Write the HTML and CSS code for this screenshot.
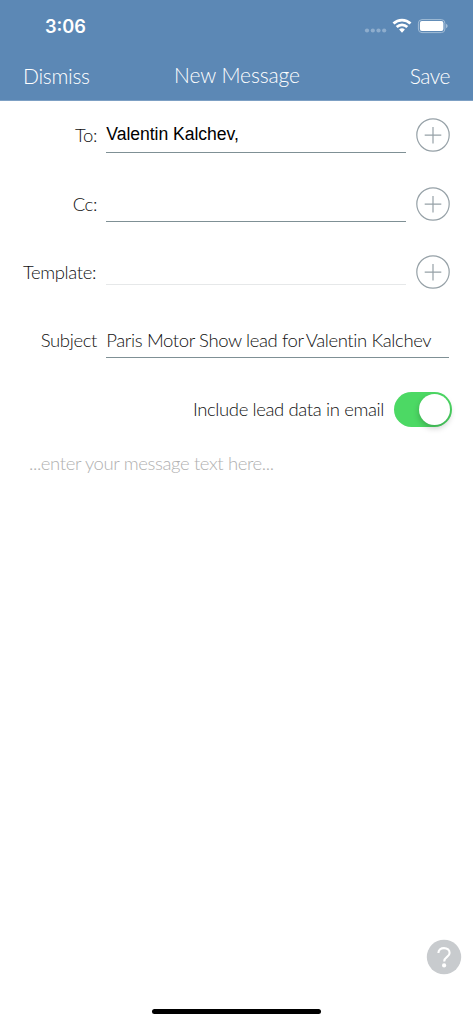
FILE: index.html
```html
<!DOCTYPE html>
<html lang="en">
<head>
<meta charset="utf-8">
<title>New Message</title>
<link rel="stylesheet" href="styles.css">
</head>
<body>
<div class="screen">
  <header class="top">
    <div class="status">
      <span class="time">3:06</span>
      <svg class="indicators" width="84" height="20" viewBox="0 0 84 20">
        <g fill="#8eadcd"><circle cx="3" cy="14.5" r="2.1"/><circle cx="8.8" cy="14.5" r="2.1"/><circle cx="14.5" cy="14.5" r="2.1"/><circle cx="20.2" cy="14.5" r="2.1"/></g>
        <g fill="none" stroke="#fff" stroke-width="2.8"><path d="M29.5 7.6a12.2 12.2 0 0 1 17 0"/><path d="M32.7 11a7.7 7.7 0 0 1 10.6 0"/></g>
        <path d="M35.1 13.6a4.4 4.4 0 0 1 5.8 0L38 16.7z" fill="#fff"/>
        <rect x="54.4" y="3.6" width="26.5" height="13" rx="3.6" fill="none" stroke="#a3bdd7"/>
        <rect x="55.9" y="5.1" width="23.5" height="10" rx="2" fill="#fff"/>
        <path d="M82 7.8q1.7.7 1.7 2.2t-1.7 2.2z" fill="#a3bdd7"/>
      </svg>
    </div>
    <nav class="nav">
      <span class="dismiss">Dismiss</span>
      <span class="title">New Message</span>
      <span class="save">Save</span>
    </nav>
  </header>
  <main class="form">
    <div class="row">
      <label class="label to">To:</label>
      <div class="field recipient">Valentin Kalchev,</div>
      <svg class="add" viewBox="0 0 34 34"><circle cx="17" cy="17" r="16.2"/><path d="M8.7 17.2h16.6M17 8.9v16.6"/></svg>
    </div>
    <div class="row">
      <label class="label cc">Cc:</label>
      <div class="field"></div>
      <svg class="add" viewBox="0 0 34 34"><circle cx="17" cy="17" r="16.2"/><path d="M8.7 17.2h16.6M17 8.9v16.6"/></svg>
    </div>
    <div class="row">
      <label class="label template">Template:</label>
      <div class="field faint"></div>
      <svg class="add" viewBox="0 0 34 34"><circle cx="17" cy="17" r="16.2"/><path d="M8.7 17.2h16.6M17 8.9v16.6"/></svg>
    </div>
    <div class="row wide">
      <label class="label subject">Subject</label>
      <div class="field subject-text"><span>Paris Motor Show lead for</span><span class="name">Valentin Kalchev</span></div>
    </div>
    <div class="option">
      <span class="include">Include lead data in email</span>
      <span class="switch"><span class="knob"></span></span>
    </div>
    <div class="message"><span>...enter your message text here...</span></div>
  </main>
  <footer class="bottom">
    <svg class="help" width="36" height="36" viewBox="0 0 36 36"><circle cx="18" cy="18" r="17.2" fill="#c8cbce"/><path d="M12.4 14C12.4 10.8 15 9.1 18 9.1c3.3 0 5.6 1.9 5.6 4.8 0 4.2-5.4 3.8-5.4 8.6" fill="none" stroke="#fff" stroke-width="2.1"/><circle cx="18.1" cy="26.4" r="2.1" fill="#fff"/></svg>
    <div class="home"></div>
  </footer>
</div>
</body>
</html>
```
FILE: styles.css
```css
* { box-sizing: border-box; }
body { margin: 0; background: #fff; }
.screen {
  width: 473px;
  height: 1024px;
  display: flex;
  flex-direction: column;
  overflow: hidden;
  font: 300 18.5px/24px Lato, "Open Sans", sans-serif;
  font-variant-ligatures: none;
  letter-spacing: -.38px;
  color: #111;
  white-space: nowrap;
}
.top { height: 101px; background: #5c88b5; border-bottom: 1px solid #7da0c4; color: #fff; }
.status { display: flex; justify-content: space-between; height: 52px; padding: 16px 25px 0 45px; }
.time { font: 600 18.2px/21px Inter, sans-serif; letter-spacing: 0; }
.nav { display: grid; grid-template-columns: 150px 1fr 150px; padding: 0 23px 0 23px; font-size: 21px; line-height: 47px; letter-spacing: -.3px; }
.title { text-align: center; font-size: 21px; line-height: 46px; letter-spacing: -.1px; padding-left: 1px; }
.save { text-align: right; letter-spacing: -.5px; }
.form { flex: 1; display: flex; flex-direction: column; }
.row { display: grid; grid-template-columns: 97px 300px 34px; column-gap: 9.3px; height: 68.5px; align-items: start; padding-top: 17px; }
.wide { grid-template-columns: 97px 343px; }
.label { text-align: right; line-height: 35px; }
.template { padding-right: 1px; }
.field { height: 35px; border-bottom: 1px solid #7f9095; line-height: 34px; }
.recipient { font: 400 17.6px/33px "Liberation Sans", Arial, sans-serif; letter-spacing: -.05px; color: #000; }
.faint { height: 30px; border-color: #e6e8e9; }
.add { width: 34px; height: 34px; fill: none; stroke: #96a1a7; stroke-width: 1.2; }
.wide .label { line-height: 33px; }
.subject-text { display: flex; gap: 2px; height: 34px; line-height: 33px; }
.option { display: flex; justify-content: flex-end; align-items: center; gap: 10px; height: 36px; margin-top: 16px; padding-right: 21px; }
.switch { display: flex; justify-content: flex-end; width: 58px; height: 35px; padding: 2px; border-radius: 18px; background: #4cd964; }
.knob { width: 31px; height: 31px; border-radius: 50%; background: #fff; box-shadow: 0 3px 6px rgba(0,0,0,.22); }
.message { padding: 24px 29px; color: #b0b0b0; }
.bottom { display: flex; flex-direction: column; align-items: flex-end; padding: 0 11px 10px 0; gap: 34px; }
.home { align-self: center; width: 169px; height: 5px; margin-left: 11px; border-radius: 3px; background: #000; }
```
